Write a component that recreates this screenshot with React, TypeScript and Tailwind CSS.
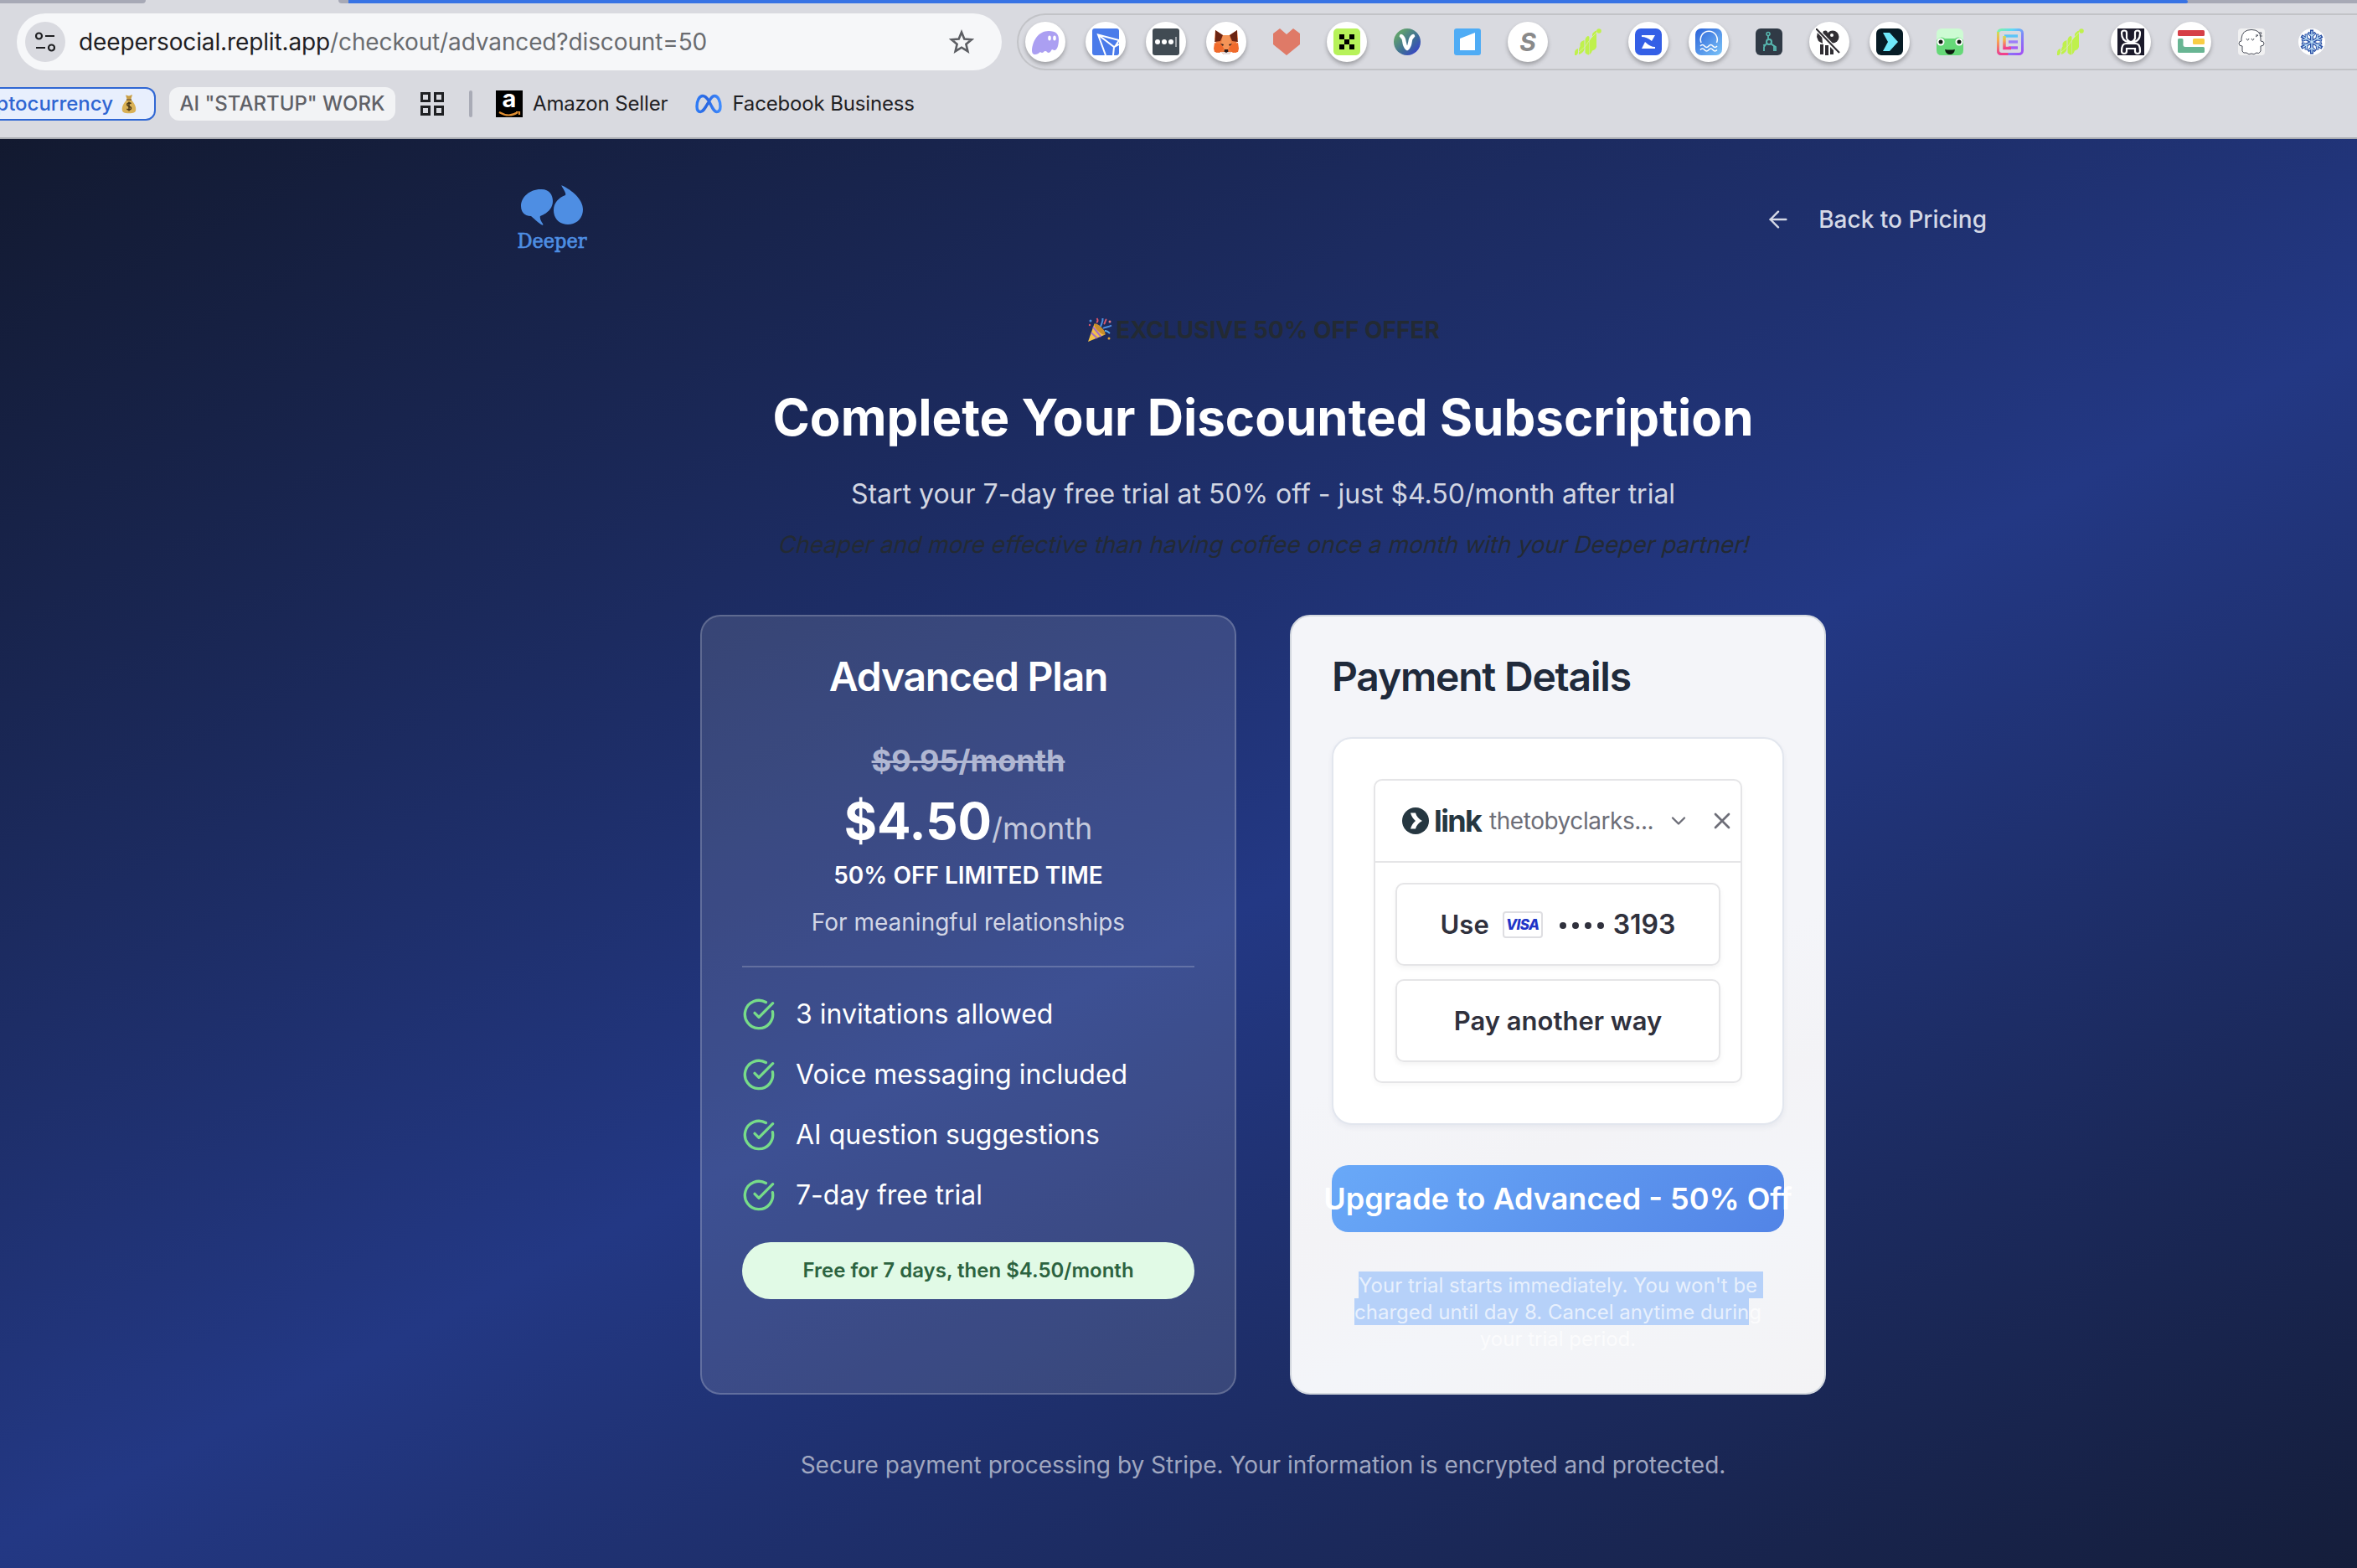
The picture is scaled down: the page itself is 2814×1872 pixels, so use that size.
import React from "react";
import { ArrowLeft, ChevronDown, CircleCheckBig, X } from "lucide-react";

const SANS = "font-['Inter',sans-serif]";

function Icon({ children, className = "" }: { children: React.ReactNode; className?: string }) {
  return (
    <svg viewBox="0 0 32 32" className={"size-8 shrink-0 " + className} fill="none">
      {children}
    </svg>
  );
}

function MoneyBag() {
  return (
    <svg viewBox="0 0 18 24" className="h-6 w-[18px] shrink-0">
      <path d="M5 1.5 9 2.5l4-1.5-1.6 5.4H6.6Z" fill="#c99f45" />
      <path d="M6.6 7h4.8C15 10.500 17.500 14.500 17.200 19c-.2 3-2.400 4.300-8.200 4.300S1 22 .8 19C.5 14.500 3 10.500 6.600 7Z" fill="#d9b156" />
      <path d="M6 6.300h6v1.600H6Z" fill="#7c5a22" />
      <path d="M11.600 11.600C9.500 10.200 6.600 11 6.700 13c.1 2.300 4.900 1.700 4.900 4.100 0 2.100-3.200 2.500-5.200 1M9 9.600v11" stroke="#4a3817" strokeWidth="1.500" fill="none" />
    </svg>
  );
}

function PartyPopper() {
  return (
    <svg viewBox="0 0 32 32" className="size-8 shrink-0">
      <path d="M2 30 9.500 8.500C14 10 21 17 22.500 21.500Z" fill="#f2c14b" />
      <path d="M5.800 19.300 13 25.800M8 12.500l9.500 11.500" stroke="#a66fc0" strokeWidth="2" />
      <ellipse cx="16" cy="15" rx="3" ry="9" transform="rotate(-45 16 15)" fill="#c98d2b" />
      <path d="M17 12c1-4 3-6 2.500-10M20 14c3-2 6-1 10-3.500" stroke="#4f8fe0" strokeWidth="2" fill="none" />
      <path d="M12 7c2-1 2-3 .5-5M24 3c-2 2-1 4-3 6" stroke="#d9576b" strokeWidth="2" fill="none" />
      <path d="M22 17c3-.5 4 1 6 3" stroke="#5aa9e8" strokeWidth="2" fill="none" />
      <circle cx="5" cy="5" r="1.500" fill="#4f8fe0" />
      <circle cx="28" cy="6" r="1.500" fill="#e07a8a" />
      <circle cx="27" cy="26" r="1.500" fill="#e3a53c" />
      <circle cx="4" cy="10" r="1.200" fill="#d9576b" />
    </svg>
  );
}

function Bars() {
  return (
    <Icon>
      <path
        d="M0 33v-4q0-4 4-5v5q-1 3-4 4ZM5 31V26q0-3 1.500-4.500V18q1-3 5-4v11q-1 4-6.500 6ZM12.500 29V13q1-3 3-4 1.500 0 2 1v21q-2 1.500-5-2ZM18 31V14q2-3 3-4V7q1-3 5-4.500V22q-1 3.500-5 4.500-1 3-3 4.500Z"
        fill="#bff14c"
      />
      <circle cx="29" cy="3" r="2.800" fill="#bff14c" />
      <path d="M4 29 13 21 19 12 27 4" stroke="#dfeeb5" strokeWidth=".7" />
    </Icon>
  );
}

const extensions: { plate?: boolean; icon: React.ReactNode }[] = [
  {
    plate: true,
    icon: (
      <Icon>
        <path d="M0 26C1 14 8 3 20 3c9 0 12 4 12 10 0 7-2 13-5 13-2 0-2-1-3-1-1 1-2 4-4 4s-2-2-4-2-2 2-4 2c-1 0-2-1-2-1-2 2-4 3-6 3-3 0-4-2-4-5Z" fill="#ab9ff2" />
        <ellipse cx="21" cy="11.500" rx="1.800" ry="3" fill="#fff" />
        <ellipse cx="27" cy="11.500" rx="1.800" ry="3" fill="#fff" />
      </Icon>
    ),
  },
  {
    plate: true,
    icon: (
      <Icon>
        <rect width="32" height="32" rx="3" fill="#4a7bea" />
        <path d="M32 14 7 7.500 16 32M7 7.500 26 22l6-3M26 22l-1 10M27 22l5-8" stroke="#fff" strokeWidth="2" />
      </Icon>
    ),
  },
  {
    plate: true,
    icon: (
      <Icon>
        <rect width="32" height="32" rx="3" fill="#414b53" />
        <circle cx="6" cy="16" r="3" fill="#fff" />
        <circle cx="14" cy="16" r="3" fill="#fff" />
        <circle cx="22" cy="16" r="3" fill="#fff" />
        <path d="M28 10v12" stroke="#cfd2d5" strokeWidth="1.300" />
      </Icon>
    ),
  },
  {
    plate: true,
    icon: (
      <Icon>
        <path d="M3 2l9 6h8l9-6 1 10-2 6 2 6-2 5-6-1-3 3h-6l-3-3-6 1-2-5 2-6-2-6Z" fill="#ee7b3f" />
        <path d="M3 2l9 6-3 7-7 1 1-5ZM29 2l-9 6 3 7 7 1-1-5Z" fill="#6b2412" />
        <path d="M12 8h8l2 10-4 7h-4l-4-7Z" fill="#f49457" />
        <path d="M2 17l8 2 3 5-5 5-6-1-1-4ZM30 17l-8 2-3 5 5 5 6-1 1-4Z" fill="#f06a2b" />
        <path d="M10 28h12l-3 3h-6Z" fill="#e6dfdf" />
        <path d="M14 25h4l.5 2.500L16 29l-2.500-1.500ZM9 18l4 1-1 2ZM23 18l-4 1 1 2Z" fill="#2a1a1a" />
      </Icon>
    ),
  },
  {
    icon: (
      <Icon>
        <path d="M0 6 8 0l8 7 8-7 8 6v13L16 32 0 19Z" fill="#df7a67" />
      </Icon>
    ),
  },
  {
    plate: true,
    icon: (
      <Icon>
        <rect width="32" height="32" rx="5" fill="#b7f25a" />
        <path d="M7 7h6v6h6V7h6v6h-6v6h6v6h-6v-6h-6v6H7v-6h6v-6H7Z" fill="#000" />
      </Icon>
    ),
  },
  {
    icon: (
      <Icon>
        <defs>
          <linearGradient id="vg" x1="0" y1="0" x2="1" y2="1">
            <stop offset=".2" stopColor="#5f9f6f" />
            <stop offset=".6" stopColor="#3d6a9a" />
            <stop offset="1" stopColor="#3636d8" />
          </linearGradient>
        </defs>
        <circle cx="16" cy="16" r="16" fill="url(#vg)" />
        <path d="M9 9q3 2 3.500 7t3.500 8q3-3 3.500-8T23 9" stroke="#fff" strokeWidth="4.500" strokeLinecap="round" strokeLinejoin="round" />
      </Icon>
    ),
  },
  {
    icon: (
      <Icon>
        <rect width="32" height="32" rx="3" fill="#4facf5" />
        <path d="M7 12 25 5v21H7Z" fill="#fff" />
      </Icon>
    ),
  },
  {
    plate: true,
    icon: (
      <span className="block text-center font-['Inter',sans-serif] text-[30px] leading-8 font-bold text-[#8a8a8a] italic">S</span>
    ),
  },
  { icon: <Bars /> },
  {
    plate: true,
    icon: (
      <Icon>
        <rect width="32" height="32" rx="7" fill="#345fe6" />
        <path d="M8 8h16l-4 7Q14 10 8 10ZM24 24H8l4-8q6 6 12 6Z" fill="#fff" />
      </Icon>
    ),
  },
  {
    plate: true,
    icon: (
      <Icon>
        <defs>
          <linearGradient id="wg" x1="0" y1="0" x2="1" y2="1">
            <stop stopColor="#2b62d9" />
            <stop offset="1" stopColor="#7cc4f8" />
          </linearGradient>
        </defs>
        <rect width="32" height="32" rx="7" fill="url(#wg)" />
        <path d="M7 17a10 10 0 1 1 18.500 0M6 21q2.500-3 5 0t5 0 5 0 5 0M6 25.500q2.500-3 5 0t5 0 5 0 5 0" stroke="#fff" strokeWidth="1.500" />
      </Icon>
    ),
  },
  {
    icon: (
      <Icon>
        <rect width="32" height="32" rx="6" fill="#303a46" />
        <path d="M15 8.500v4M13 18l-3 4v5M18 18l4 3v6M13 19l-4 1M18 18l6 4v5" stroke="#57b8b0" strokeWidth="1.800" />
        <circle cx="15" cy="6.500" r="2" stroke="#57b8b0" strokeWidth="1.500" />
        <circle cx="16" cy="16" r="3" stroke="#57b8b0" strokeWidth="2" />
      </Icon>
    ),
  },
  {
    plate: true,
    icon: (
      <Icon>
        <path d="M2 4q3-2 5 2l1 12-5-3-2-5ZM9 3q5-2 5 3v5L8 6ZM5 19h4v12H5ZM11 20h4v12h-4ZM17 22l4 4v5h-4Z" fill="#302e33" />
        <circle cx="20" cy="10" r="7.500" fill="#302e33" />
        <circle cx="19" cy="8" r="2" fill="#fff" />
        <path d="M0 0 28 29" stroke="#fff" strokeWidth="4.500" />
        <path d="M0 0 28 29" stroke="#302e33" strokeWidth="2" />
      </Icon>
    ),
  },
  {
    plate: true,
    icon: (
      <Icon>
        <rect width="32" height="32" rx="6" fill="#071c26" />
        <path d="M8 5h8l10 11-10 11H8l6-11Z" fill="#6fe9fb" />
      </Icon>
    ),
  },
  {
    icon: (
      <Icon>
        <rect width="32" height="32" rx="6" fill="#cdfbd3" />
        <path d="M0 14Q5 8 10 12h12q5-4 10 2v12q0 6-6 6H6q-6 0-6-6Z" fill="#66d878" />
        <circle cx="5" cy="16" r="4.500" fill="#fff" />
        <circle cx="27" cy="16" r="4.500" fill="#fff" />
        <circle cx="5" cy="16" r="2.500" fill="#0d1b10" />
        <circle cx="27" cy="16" r="2.500" fill="#0d1b10" />
        <path d="M10 25q6 1 12 0-1 6-6 6t-6-6Z" fill="#0d1b10" />
      </Icon>
    ),
  },
  {
    icon: (
      <Icon>
        <defs>
          <linearGradient id="eg" x1="0" y1="0" x2="1" y2="1">
            <stop stopColor="#7cf3a8" />
            <stop offset=".3" stopColor="#5fd8f8" />
            <stop offset=".6" stopColor="#7d86f8" />
            <stop offset="1" stopColor="#a24df5" />
          </linearGradient>
          <linearGradient id="eg2" x1="0" y1="0" x2="0" y2="1">
            <stop stopColor="#c8e05a" />
            <stop offset=".35" stopColor="#f7b04a" />
            <stop offset="1" stopColor="#f03f8d" />
          </linearGradient>
        </defs>
        <rect x="1.500" y="1.500" width="29" height="29" rx="4" stroke="url(#eg)" strokeWidth="3" />
        <path d="M1.500 4v23q0 3.500 4 3.500h8" stroke="url(#eg2)" strokeWidth="3" />
        <path d="M9 7.300h16v3.400H9Z" fill="#5cc4f8" />
        <path d="M14 14.300h11v3.400H14Z" fill="#9b7ff8" />
        <path d="M14 21.300h11v3.400H14Z" fill="#a55cf5" />
        <path d="M9 9v14.500h8" stroke="url(#eg2)" strokeWidth="3.500" />
      </Icon>
    ),
  },
  { icon: <Bars /> },
  {
    plate: true,
    icon: (
      <Icon>
        <path d="M0 0h32v32H0Z" fill="#1c1b2b" />
        <path d="M11 12V5q0-2.500-3-2.500T5 5.500q0 11 11 11t11-11q0-3-3-3T21 5v7q-2 4-5 4t-5-4M8 30q-3 0-3-3 0-9 5-9h12q5 0 5 9 0 3-3 3t-3-3v-3H11v3q0 3-3 3Z" stroke="#fff" strokeWidth="2.200" />
      </Icon>
    ),
  },
  {
    plate: true,
    icon: (
      <Icon>
        <rect y="2" width="32" height="7" rx="1.500" fill="#d63f47" />
        <path d="M1.500 12H5q1.500 0 1.500 1.500V20Q6.500 22 9 22h21.500q1.500 0 1.500 1.500v4q0 1.500-1.500 1.500h-29Q0 29 0 27.500v-14Q0 12 1.500 12Z" fill="#68b593" />
        <rect x="18" y="12" width="14" height="7" rx="1.500" fill="#f9cd45" />
      </Icon>
    ),
  },
  {
    icon: (
      <Icon>
        <rect width="32" height="32" rx="4" fill="#f1f1f2" />
        <path d="M4 15V12Q5 1.500 16 1.500T27 12v3q4 0 4 3t-4 3v6q-2 4-5 2-3 3-6 1-3 2-6-1-4 1-5-2v-6q-4 0-4-3t3-3Z" fill="#fff" stroke="#4b4f5a" strokeWidth="1" />
        <path d="M10 12q1.500 4 3 0M16 12q1.500 4 3 0M21 8h3l-3 2M25 5h3l-2 4h3" stroke="#4b4f5a" strokeWidth="1" />
      </Icon>
    ),
  },
  {
    icon: (
      <Icon>
        <circle cx="16" cy="16" r="16" fill="#fff" />
        <g stroke="#2b50a6" strokeWidth="4">
          <path d="M16 1.500v29M3.500 9l25 14M28.500 9 3.500 23" />
          <path d="M11.500 5l4.500 4 4.500-4M11.500 27l4.500-4 4.500 4M4 14.500l6-2-1-6M28 14.500l-6-2 1-6M4 17.500l6 2-1 6M28 17.500l-6 2 1 6" strokeWidth="3.200" />
        </g>
        <g stroke="#c4e6fa" strokeWidth="1.300">
          <path d="M16 3v26M5 9.500l22 13M27 9.500 5 22.500" />
          <path d="M12.500 6l3.500 3 3.500-3M12.500 26l3.500-3 3.500 3M5 14l5-1.500-1-5M27 14l-5-1.500 1-5M5 18l5 1.500-1 5M27 18l-5 1.500 1 5" />
        </g>
      </Icon>
    ),
  },
];

function BrowserBar() {
  return (
    <div className="flex h-[166px] flex-col border-b-2 border-[#a9abb1] bg-[#d9dae0]">
      <div className="flex h-1 shrink-0 justify-between">
        <div className="h-1 w-[174px] rounded-br-[6px] bg-[#a7a9b6]" />
        <div className="flex h-1 w-[2410px] rounded-bl-[6px] bg-[#a7a9b6] pl-3">
          <div className="h-1 w-[2196px] rounded-r-[2px] bg-[#3873e4]" />
        </div>
      </div>
      <div className="mt-3 flex h-[68px] shrink-0">
        <div className="ml-5 flex w-[1176px] items-center rounded-full bg-[#f6f7f9] pr-8 pl-[10px]">
          <div className="flex size-12 items-center justify-center rounded-full bg-[#d9dae0]">
            <svg viewBox="0 0 24 24" className="size-6" fill="none" stroke="#1f2023" strokeWidth="2.200">
              <circle cx="4.500" cy="5" r="3.500" />
              <path d="M12 5h11M1 19h11" />
              <circle cx="19.500" cy="19" r="3.500" />
            </svg>
          </div>
          <div className="ml-4 flex-1 text-[28px] leading-9 tracking-[-0.130px] whitespace-nowrap text-[#6a6c70]">
            <span className="text-[#1f2023]">deepersocial.replit.app</span>/checkout/advanced?discount=50
          </div>
          <svg viewBox="0 0 32 32" className="size-8" fill="none" stroke="#5c5e63" strokeWidth="2.600">
            <path d="M16 4.500l3.300 8 8.700.7-6.600 5.600 2 8.400L16 22.700l-7.400 4.500 2-8.400L4 13.200l8.700-.7Z" />
          </svg>
        </div>
        <div className="ml-[18px] flex flex-1 items-center gap-6 overflow-visible rounded-l-full border-2 border-r-0 border-[#c2c3c7] pl-2">
          {extensions.map((e, i) => (
            <div
              key={i}
              className={
                e.plate
                  ? "flex size-12 shrink-0 items-center justify-center rounded-full bg-white shadow-[0_3px_5px_rgba(0,0,0,0.28)]"
                  : "flex size-12 shrink-0 items-center justify-center"
              }
            >
              {e.icon}
            </div>
          ))}
        </div>
      </div>
      <div className="mt-5 flex h-10 shrink-0 items-center text-[24px] leading-10 whitespace-nowrap text-[#1f2023]">
        <div className="flex h-10 w-[186px] items-center justify-end gap-[10px] rounded-r-[12px] border-2 border-l-0 border-[#3067d3] bg-[#e8effd] pr-[21px] font-medium text-[#2f66d2]">
          <span>ptocurrency</span>
          <MoneyBag />
        </div>
        <div className="ml-4 flex h-10 w-[270px] items-center justify-center rounded-[12px] bg-[#f2f3f5] font-medium text-[#5f6167]">
          AI "STARTUP" WORK
        </div>
        <svg viewBox="0 0 28 28" className="ml-[30px] size-7" fill="none" stroke="#1f2023" strokeWidth="3">
          <path d="M1.500 1.500h9v9h-9ZM17.500 1.500h9v9h-9ZM1.500 17.500h9v9h-9ZM17.500 17.500h9v9h-9Z" />
        </svg>
        <div className="ml-[30px] h-8 w-1 rounded-full bg-[#a9abb6]" />
        <div className="ml-7 flex size-8 flex-col items-center bg-black">
          <span className="h-[25px] text-[29px] leading-[19px] font-bold text-white">a</span>
          <svg viewBox="0 0 32 7" className="h-[7px] w-8" fill="none">
            <path d="M4 1q12 7 22 0M24 0h4v4" stroke="#e08f33" strokeWidth="2.200" />
          </svg>
        </div>
        <span className="ml-3 tracking-[-0.150px]">Amazon Seller</span>
        <svg viewBox="0 0 32 24" className="ml-[33px] h-6 w-8" fill="none">
          <defs>
            <linearGradient id="meta" x1="0" y1="0" x2="1" y2="0">
              <stop stopColor="#2f7cf6" />
              <stop offset=".4" stopColor="#2a66e0" />
              <stop offset="1" stopColor="#3f8cff" />
            </linearGradient>
          </defs>
          <path
            d="M16 8C13 3.500 11.500 2.500 9 2.500 4.500 2.500 2 9 2 15c0 4 1.500 6.500 4.300 6.500 3 0 5-3.500 9.700-11.500C18.500 5 20.500 2.500 23 2.500 27.500 2.500 30 9 30 15c0 4-1.500 6.500-4.300 6.500-3.200 0-5.200-4.500-9.700-13.500Z"
            stroke="url(#meta)"
            strokeWidth="3.400"
          />
        </svg>
        <span className="ml-3 tracking-[-0.150px]">Facebook Business</span>
      </div>
    </div>
  );
}

function Header() {
  return (
    <header className="mt-12 ml-[616px] flex h-24 w-[1756px] items-center justify-between">
      <div className="flex h-24 w-[86px] flex-col items-center pt-[7px] text-[#4e8ee3]">
        <svg viewBox="0 0 76 48" className="h-12 w-[76px]" fill="currentColor">
          <path d="M24 5C34 4 39 11 39 19c0 9-7 15-15 18-1 2 1 7 3 9 1 2 0 2-2 1-5-3-8-7-12-10C6 37 1 33 1 25 1 14 12 5 24 5Z" />
          <path d="M50 .5C49 0 49.500 1 50 2c3 5 5 8 4 10-8 3-14 9-14 18 0 11 8 17 17 17 10 0 18-7 18-18C75 17 62 6 50 .5Z" />
        </svg>
        <span className="font-['DejaVu_Serif_Condensed','DejaVu_Serif',serif] text-[25px] leading-[38px] font-normal [-webkit-text-stroke:0.7px_currentColor]">
          Deeper
        </span>
      </div>
      <div className="flex items-center gap-8 text-[28px] leading-10 font-medium text-[#d5d9e6]">
        <ArrowLeft className="size-8" strokeWidth={1.800} />
        <span>Back to Pricing</span>
      </div>
    </header>
  );
}

const features = ["3 invitations allowed", "Voice messaging included", "AI question suggestions", "7-day free trial"];

function PlanCard() {
  return (
    <section className="flex h-[931px] w-[640px] flex-col rounded-[24px] border-2 border-white/20 bg-white/[0.12] px-12 text-center text-white">
      <h2 className="mt-12 text-[48px] leading-[48px] font-semibold tracking-[-1.200px]">Advanced Plan</h2>
      <p className="mt-[50px] text-[36px] leading-[52px] font-bold text-[#b0b7d2] line-through">$9.95/month</p>
      <p className="mt-[10px] text-[60px] leading-[72px] font-bold">
        $4.50<span className="text-[36px] leading-none font-normal text-[#c3c8dc]">/month</span>
      </p>
      <p className="mt-[9px] text-[28px] leading-10 font-semibold">50% OFF LIMITED TIME</p>
      <p className="mt-4 text-[28px] leading-10 text-[#d2d6e5]">For meaningful relationships</p>
      <div className="mt-8 h-0.5 bg-white/20" />
      <ul className="mt-9 flex flex-col gap-8">
        {features.map((f) => (
          <li key={f} className="flex h-10 items-center gap-6 text-[32px] leading-10">
            <CircleCheckBig className="size-10 text-[#77dc89]" strokeWidth={2} />
            {f}
          </li>
        ))}
      </ul>
      <div className="mt-9 h-[68px] rounded-full bg-[#e1fae6] text-[24px] leading-[68px] font-semibold text-[#2c6340]">
        Free for 7 days, then $4.50/month
      </div>
    </section>
  );
}

function LinkBox() {
  return (
    <div className="mx-auto mt-12 flex h-[363px] w-[440px] flex-col rounded-[10px] border-2 border-[#e5e5e7] bg-white shadow-[0_3px_6px_rgba(0,0,0,0.03)]">
      <div className="flex h-[98px] items-center border-b-2 border-[#e5e5e7] pr-[6px] pl-8">
        <svg viewBox="0 0 32 32" className="size-8 shrink-0">
          <circle cx="16" cy="16" r="16" fill="#263741" />
          <path d="M10 6.500h6c1 4 4 7.500 8 9.500-4 2-7 5.500-8 9.500h-6c1-4 3-7 6-9.500-3-2.500-5-5.500-6-9.500Z" fill="#fff" />
        </svg>
        <span className="ml-[6px] w-[61px] text-[36px] leading-10 font-bold tracking-[-1.600px] text-[#263741]">link</span>
        <span className="ml-[5px] w-[196px] text-[28px] leading-10 tracking-[-0.450px] whitespace-nowrap text-[#6d6e78]">
          thetobyclarks...
        </span>
        <ChevronDown className="ml-auto size-7 text-[#6d6e78]" strokeWidth={2} />
        <X className="ml-[22px] size-8 text-[#6d6e78]" strokeWidth={2} />
      </div>
      <div className="flex flex-col gap-4 px-6 pt-6">
        <div className="flex h-[99px] items-center justify-center rounded-[10px] border-2 border-[#e5e5e7] text-[31px] leading-10 font-semibold text-[#30313d] shadow-[0_3px_6px_rgba(0,0,0,0.05)]">
          <span>Use</span>
          <span className="ml-4 flex h-8 w-12 items-center justify-center rounded-[4px] border-2 border-[#dedee2] text-[17px] font-extrabold tracking-[-0.600px] text-[#1f35c7] italic">
            VISA
          </span>
          <span className="ml-[20px] flex gap-[7px] pt-[3px]">
            <i className="size-2 rounded-full bg-[#30313d]" />
            <i className="size-2 rounded-full bg-[#30313d]" />
            <i className="size-2 rounded-full bg-[#30313d]" />
            <i className="size-2 rounded-full bg-[#30313d]" />
          </span>
          <span className="ml-[11px] text-[32px]">3193</span>
        </div>
        <div className="flex h-[99px] items-center justify-center rounded-[10px] border-2 border-[#e5e5e7] text-[31px] leading-10 font-semibold text-[#30313d] shadow-[0_3px_6px_rgba(0,0,0,0.05)]">
          Pay another way
        </div>
      </div>
    </div>
  );
}

function PaymentCard() {
  return (
    <section className="flex h-[931px] w-[640px] flex-col rounded-[24px] border-2 border-[#d3d8df] bg-[linear-gradient(160deg,#f4f5f9_0%,#f4f5f9_50%,#f3f3f6_65%,#f3f5f9_80%,#f3f3f5_100%)] px-12">
      <h2 className="mt-12 text-[48px] leading-[48px] font-semibold tracking-[-1.200px] text-[#202a3b]">Payment Details</h2>
      <div className="mt-12 h-[463px] shrink-0 rounded-[24px] border-2 border-[#e2e6ee] bg-white shadow-[0_3px_6px_rgba(30,50,100,0.06)]">
        <LinkBox />
      </div>
      <div className="mt-12 flex h-20 shrink-0 items-center justify-center rounded-[20px] bg-[linear-gradient(135deg,#69a9f8,#5284e6)] text-[36px] font-semibold whitespace-nowrap text-white">
        Upgrade to Advanced - 50% Off
      </div>
      <p className="mt-12 text-center text-[24px] leading-8 whitespace-pre text-white/70">
        <span className="-mr-[7px] bg-[#b6d1f9] pt-[2px] pb-px">Your trial starts immediately. You won't be </span>
        <br />
        <span className="bg-[#b6d1f9] pt-[2px] pb-px">charged until day 8. Cancel anytime durin</span>g
        <br />
        your trial period.
      </p>
    </section>
  );
}

export default function App() {
  return (
    <div className={"flex h-[1872px] w-[2814px] flex-col overflow-hidden antialiased " + SANS}>
      <BrowserBar />
      <div className="flex-1 bg-[linear-gradient(to_bottom_right,#111729,#233884_50%,#111729)] bg-[length:3550px_1811px] bg-[position:-267px_0]">
        <Header />
        <main className="ml-[836px] flex w-[1344px] flex-col items-center text-center">
          <div className="mt-[60px] flex h-12 items-center text-[28px] leading-10 font-bold text-[#232a33]">
            <PartyPopper />
            <span className="ml-[3px]">EXCLUSIVE 50% OFF OFFER</span>
          </div>
          <h1 className="mt-[44px] text-[60px] leading-[72px] font-bold text-white">Complete Your Discounted Subscription</h1>
          <p className="mt-8 text-[32px] leading-[48px] text-[#d2d6e2]">
            Start your 7-day free trial at 50% off - just $4.50/month after trial
          </p>
          <p className="mt-4 origin-[50%_75%] -skew-x-[14deg] text-[28px] leading-10 text-[#232a33]">
            Cheaper and more effective than having coffee once a month with your Deeper partner!
          </p>
          <div className="mt-16 flex w-full justify-between text-left">
            <PlanCard />
            <PaymentCard />
          </div>
          <p className="mt-16 text-[28px] leading-10 text-[#a0a7c0]">
            Secure payment processing by Stripe. Your information is encrypted and protected.
          </p>
        </main>
      </div>
    </div>
  );
}
